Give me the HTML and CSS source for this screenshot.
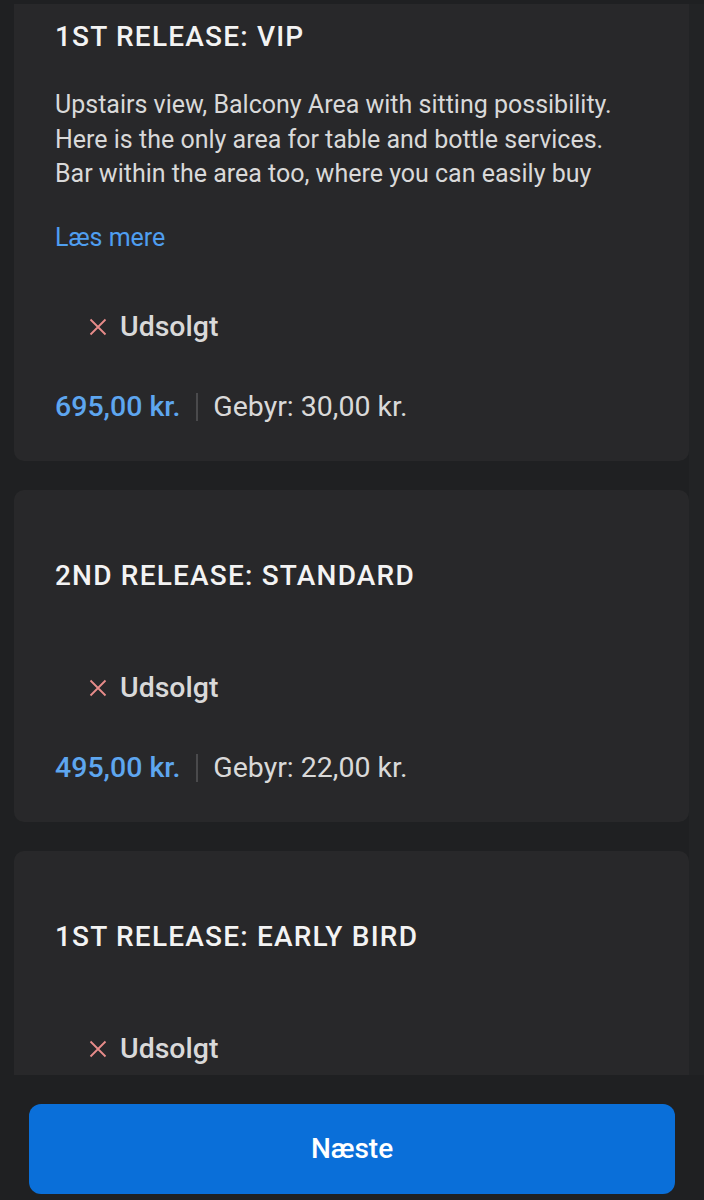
FILE: index.html
```html
<!DOCTYPE html>
<html lang="da">
<head>
<meta charset="utf-8">
<title>Billetter</title>
<link rel="stylesheet" href="styles.css">
</head>
<body>
<div class="app">
  <div class="topstrip"></div>
  <main class="scroller">
    <div class="list">
      <section class="card">
        <h2 class="title">1ST RELEASE: VIP</h2>
        <p class="desc">Upstairs view, Balcony Area with sitting possibility.<br>Here is the only area for table and bottle services.<br>Bar within the area too, where you can easily buy</p>
        <a class="more" href="#">Læs mere</a>
        <div class="status">
          <svg class="x" viewBox="0 0 18 18" width="18" height="18"><path d="M1.5 1.5L16.5 16.5M16.5 1.5L1.5 16.5" stroke="currentColor" stroke-width="1.8" fill="none"/></svg>
          <span>Udsolgt</span>
        </div>
        <div class="prices"><span class="price">695,00 kr.</span><span class="sep"></span><span class="fee">Gebyr: 30,00 kr.</span></div>
      </section>
      <section class="card">
        <h2 class="title">2ND RELEASE: STANDARD</h2>
        <div class="status gap">
          <svg class="x" viewBox="0 0 18 18" width="18" height="18"><path d="M1.5 1.5L16.5 16.5M16.5 1.5L1.5 16.5" stroke="currentColor" stroke-width="1.8" fill="none"/></svg>
          <span>Udsolgt</span>
        </div>
        <div class="prices"><span class="price">495,00 kr.</span><span class="sep"></span><span class="fee">Gebyr: 22,00 kr.</span></div>
      </section>
      <section class="card card-last">
        <h2 class="title">1ST RELEASE: EARLY BIRD</h2>
        <div class="status gap">
          <svg class="x" viewBox="0 0 18 18" width="18" height="18"><path d="M1.5 1.5L16.5 16.5M16.5 1.5L1.5 16.5" stroke="currentColor" stroke-width="1.8" fill="none"/></svg>
          <span>Udsolgt</span>
        </div>
      </section>
    </div>
  </main>
  <footer class="bottombar">
    <button class="next" type="button"><span class="next-label">Næste</span></button>
  </footer>
</div>
</body>
</html>
```
FILE: styles.css
```css
html, body {
  margin: 0;
  padding: 0;
  background: #1f2022;
}
body {
  font-family: Roboto, "Liberation Sans", sans-serif;
  color: #e3e3e3;
}
.app {
  height: 1200px;
  display: flex;
  flex-direction: column;
  overflow: hidden;
}
.topstrip {
  height: 4px;
  flex: none;
  background: #1f2022;
}
.scroller {
  height: 1071px;
  flex: none;
  overflow: hidden;
  padding-right: 15px;
  background: linear-gradient(to right, #1f2022 689px, #222325 689px);
}
.list {
  margin-top: -53px;
  padding-left: 14px;
  display: flex;
  flex-direction: column;
  gap: 29px;
}
.card {
  background: #28282a;
  border-radius: 10px;
  padding: 70px 41px 38px;
  display: flex;
  flex-direction: column;
  align-items: flex-start;
}
.card-last {
  padding-bottom: 80px;
}
.title {
  margin: 0;
  font-size: 28px;
  line-height: 32px;
  font-weight: 500;
  letter-spacing: 1.2px;
  color: #f3f3f3;
}
.desc {
  margin: 35px 0 0;
  font-size: 25px;
  line-height: 34.5px;
  color: #d9d9d9;
  white-space: nowrap;
}
.more {
  margin-top: 30px;
  font-size: 25px;
  line-height: 32px;
  color: #4f9ef0;
  text-decoration: none;
}
.status {
  margin-top: 57px;
  margin-left: 34px;
  display: flex;
  align-items: center;
  gap: 13px;
  font-size: 28.5px;
  line-height: 32px;
  font-weight: 500;
  color: #d9d9d9;
}
.status.gap {
  margin-top: 80px;
}
.x {
  color: #e88c8a;
}
.prices {
  margin-top: 48px;
  display: flex;
  align-items: center;
  font-size: 28.5px;
  line-height: 32px;
}
.price {
  color: #5ea6ef;
  font-weight: 500;
}
.sep {
  width: 2px;
  height: 28px;
  background: #4a4a4c;
  margin: 0 15px 0 16px;
}
.fee {
  color: #d9d9d9;
}
.bottombar {
  flex: 1;
  background: #1f2022;
  padding: 29px 29px 0;
}
.next {
  display: flex;
  align-items: center;
  justify-content: center;
  width: 100%;
  height: 90px;
  padding: 0;
  border: 0;
  border-radius: 12px;
  background: #0a6fd9;
  color: #ffffff;
  font-family: Roboto, "Liberation Sans", sans-serif;
  font-size: 28px;
  line-height: 34px;
  font-weight: 500;
}
```
